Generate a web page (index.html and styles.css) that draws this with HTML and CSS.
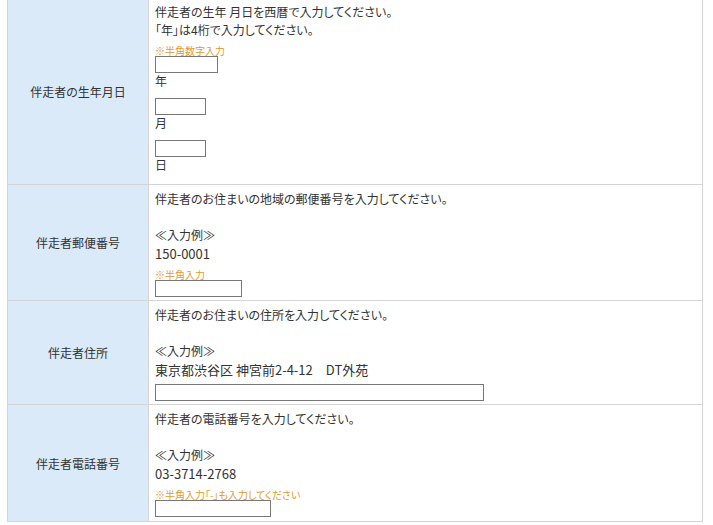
FILE: index.html
```html
<!DOCTYPE html>
<html lang="ja">
<head>
    <meta charset="UTF-8">
    <title>伴走者情報の入力</title>
    <link rel="stylesheet" href="styles.css">
</head>
<body>
    <table class="entry-table">
        <tr>
            <th>伴走者の生年月日</th>
            <td>
                <p class="guide guide-tight">伴走者の生年 月日を西暦で入力してください。<br>「年」は4桁で入力してください。</p>
                <p class="note">※半角数字入力</p>
                <div class="date-part">
                    <input type="text" class="field field-year">
                    <span>年</span>
                </div>
                <div class="date-part">
                    <input type="text" class="field field-short">
                    <span>月</span>
                </div>
                <div class="date-part">
                    <input type="text" class="field field-short">
                    <span>日</span>
                </div>
            </td>
        </tr>
        <tr>
            <th>伴走者郵便番号</th>
            <td>
                <p class="guide">伴走者のお住まいの地域の郵便番号を入力してください。</p>
                <p class="example-label">≪入力例≫</p>
                <p class="sample">150-0001</p>
                <p class="note">※半角入力</p>
                <input type="text" class="field field-zip">
            </td>
        </tr>
        <tr>
            <th>伴走者住所</th>
            <td>
                <p class="guide">伴走者のお住まいの住所を入力してください。</p>
                <p class="example-label">≪入力例≫</p>
                <p class="sample sample-spaced">東京都渋谷区 神宮前2-4-12　DT外苑</p>
                <input type="text" class="field field-address">
            </td>
        </tr>
        <tr>
            <th>伴走者電話番号</th>
            <td class="last-cell">
                <p class="guide">伴走者の電話番号を入力してください。</p>
                <p class="example-label">≪入力例≫</p>
                <p class="sample">03-3714-2768</p>
                <p class="note">※半角入力「-」も入力してください</p>
                <input type="text" class="field field-tel">
            </td>
        </tr>
    </table>
</body>
</html>
```

FILE: styles.css
```css
body {
    margin: 0;
    font-family: "Noto Sans CJK JP", sans-serif;
    font-size: 12px;
    color: #333;
    background-color: #fff;
}

p {
    margin: 0;
}

.entry-table {
    width: 696px;
    margin: -3px 0 0 7px;
    border-collapse: collapse;
}

.entry-table th,
.entry-table td {
    border: 1px solid #d4d4d4;
}

.entry-table th {
    width: 140px;
    padding: 0;
    background-color: #dbeaf8;
    font-weight: normal;
    text-align: center;
    vertical-align: middle;
    font-feature-settings: "palt";
}

.entry-table td {
    padding: 5px 5px 3px 6px;
    vertical-align: top;
    line-height: 18px;
}

.entry-table .last-cell {
    padding-bottom: 4px;
}

.guide {
    font-feature-settings: "palt";
}

.guide-tight {
    margin-bottom: 6px;
}

.example-label {
    margin-top: 18px;
}

.sample {
    font-size: 13px;
    line-height: 20px;
}

.sample-spaced {
    margin-bottom: 4px;
}

.note {
    margin-top: 5px;
    font-size: 10px;
    line-height: 11px;
    color: #e09b2d;
    font-feature-settings: "palt";
}

.field {
    display: block;
    height: 17px;
    margin: 0;
    padding: 0 2px;
    box-sizing: border-box;
    border: 1px solid #777;
    background-color: #fff;
}

.field-year {
    width: 63px;
}

.field-short {
    width: 51px;
}

.field-zip {
    width: 87px;
}

.field-address {
    width: 329px;
}

.field-tel {
    width: 116px;
}

.date-part span {
    display: block;
    line-height: 16px;
    margin-bottom: 9px;
}

.date-part:last-child span {
    margin-bottom: 8px;
}
```
